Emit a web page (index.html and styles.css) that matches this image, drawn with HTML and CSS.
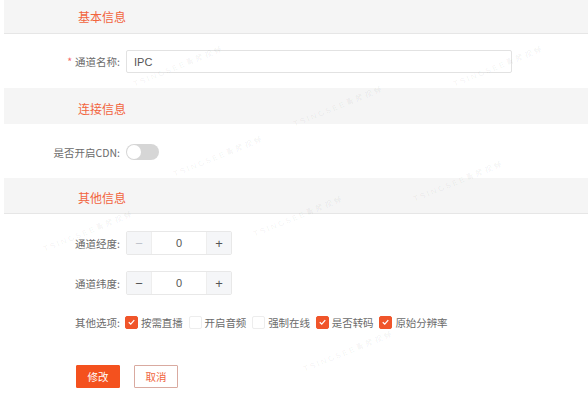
FILE: index.html
```html
<!DOCTYPE html>
<html lang="zh">
<head>
<meta charset="utf-8">
<link rel="stylesheet" href="styles.css">
</head>
<body>
<div class="page">
  <div class="band band-first"><span class="band-title">基本信息</span></div>
  <div class="row row-name">
    <label class="label"><span class="star">*</span>通道名称:</label>
    <div class="input">IPC</div>
  </div>

  <div class="band band-2"><span class="band-title">连接信息</span></div>
  <div class="row row-cdn">
    <label class="label">是否开启CDN:</label>
    <div class="switch"><span class="knob"></span></div>
  </div>

  <div class="band band-3"><span class="band-title">其他信息</span></div>
  <div class="row row-num1">
    <label class="label">通道经度:</label>
    <div class="num">
      <span class="num-btn disabled">−</span>
      <span class="num-val">0</span>
      <span class="num-btn">+</span>
    </div>
  </div>
  <div class="row row-num2">
    <label class="label">通道纬度:</label>
    <div class="num">
      <span class="num-btn">−</span>
      <span class="num-val">0</span>
      <span class="num-btn">+</span>
    </div>
  </div>
  <div class="row row-opts">
    <label class="label">其他选项:</label>
    <div class="opts">
      <span class="opt"><span class="box checked"><svg viewBox="0 0 12 12" width="12" height="12"><path d="M3 6.2 L5.2 8.3 L9 4" fill="none" stroke="#fff" stroke-width="1.4"/></svg></span>按需直播</span>
      <span class="opt"><span class="box"></span>开启音频</span>
      <span class="opt"><span class="box"></span>强制在线</span>
      <span class="opt"><span class="box checked"><svg viewBox="0 0 12 12" width="12" height="12"><path d="M3 6.2 L5.2 8.3 L9 4" fill="none" stroke="#fff" stroke-width="1.4"/></svg></span>是否转码</span>
      <span class="opt"><span class="box checked"><svg viewBox="0 0 12 12" width="12" height="12"><path d="M3 6.2 L5.2 8.3 L9 4" fill="none" stroke="#fff" stroke-width="1.4"/></svg></span>原始分辨率</span>
    </div>
  </div>
  <div class="actions">
    <button class="btn btn-primary">修改</button>
    <button class="btn btn-plain">取消</button>
  </div>
</div>
<div class="wm">
  <span class="wm-t w1">TSINGSEE青犀视频</span>
  <span class="wm-t w2">TSINGSEE青犀视频</span>
  <span class="wm-t w3">TSINGSEE青犀视频</span>
  <span class="wm-t w4">TSINGSEE青犀视频</span>
  <span class="wm-t w5">TSINGSEE青犀视频</span>
  <span class="wm-t w6">TSINGSEE青犀视频</span>
  <span class="wm-t w7">TSINGSEE青犀视频</span>
  <span class="wm-t w8">TSINGSEE青犀视频</span>
</div>
</body>
</html>
```

FILE: styles.css
```css
html, body {
  margin: 0;
  padding: 0;
  background: #fff;
}
body {
  font-family: "Liberation Sans", "Noto Sans CJK SC", sans-serif;
  color: #6b6b6b;
  font-size: 10.5px;
  width: 588px;
  height: 403px;
  overflow: hidden;
  position: relative;
}
.page {
  padding-left: 4px;
}
.band {
  height: 36px;
  background: #f5f5f5;
  border-bottom: 1px solid #e6e6e6;
  display: flex;
  align-items: center;
  padding-left: 74px;
  padding-top: 4px;
  box-sizing: border-box;
}
.band-first {
  height: 34px;
  padding-top: 0;
}
.band-2 { margin-top: 15px; border-bottom: none; }
.band-3 { margin-top: 14px; }
.band-title {
  color: #f2643d;
  font-size: 12px;
  font-family: "Noto Sans CJK SC", sans-serif;
}
.row {
  display: flex;
  align-items: center;
  height: 24px;
}
.label {
  width: 116px;
  text-align: right;
  margin-right: 6px;
  font-family: "Noto Sans CJK SC", sans-serif;
  white-space: nowrap;
}
.star {
  color: #f56c6c;
  margin-right: 3px;
}
.row-name { margin-top: 16px; height: 23px; }
.input {
  width: 386px;
  height: 23px;
  box-sizing: border-box;
  border: 1px solid #e2e2e2;
  border-radius: 2px;
  padding-left: 7px;
  display: flex;
  align-items: center;
  color: #555;
  font-size: 11px;
}
.row-cdn { margin-top: 16px; }
.switch {
  width: 33px;
  height: 16px;
  border-radius: 8px;
  background: #d6d6d6;
  position: relative;
}
.knob {
  position: absolute;
  left: 1px;
  top: 1px;
  width: 14px;
  height: 14px;
  border-radius: 50%;
  background: #fff;
}
.row-num1 { margin-top: 17px; }
.row-num2 { margin-top: 16px; }
.num {
  display: flex;
  width: 106px;
  height: 24px;
  box-sizing: border-box;
  border: 1px solid #e8e8e8;
  border-radius: 2px;
}
.num-btn {
  width: 24px;
  background: #f5f6f8;
  display: flex;
  align-items: center;
  justify-content: center;
  color: #555;
  font-size: 13px;
}
.num-btn.disabled { color: #c0c4cc; }
.num-btn:first-child { border-right: 1px solid #eeeeee; }
.num-btn:last-child { border-left: 1px solid #eeeeee; }
.num-val {
  flex: 1;
  display: flex;
  align-items: center;
  justify-content: center;
  color: #555;
  font-size: 11px;
}
.row-opts { margin-top: 15px; }
.opts {
  display: flex;
  align-items: center;
  gap: 6px;
  margin-left: -1px;
}
.opt {
  display: flex;
  align-items: center;
  gap: 3px;
  font-family: "Noto Sans CJK SC", sans-serif;
  letter-spacing: -0.1px;
}
.box {
  width: 13px;
  height: 13px;
  box-sizing: border-box;
  border: 1px solid #ededed;
  border-radius: 2px;
  background: #fff;
  display: flex;
  align-items: center;
  justify-content: center;
}
.box.checked {
  background: #f0552a;
  border-color: #f0552a;
}
.actions {
  display: flex;
  gap: 14px;
  margin-top: 31px;
  padding-left: 72px;
}
.btn {
  height: 23px;
  box-sizing: border-box;
  font-family: "Noto Sans CJK SC", sans-serif;
  font-size: 10.5px;
  border-radius: 1px;
  padding: 0;
  cursor: pointer;
}
.btn-primary {
  width: 44px;
  background: #f4511e;
  border: 1px solid #f4511e;
  color: #fff;
}
.btn-plain {
  width: 44px;
  background: #fff;
  border: 1px solid #d9aaa0;
  color: #f0643c;
}
.wm {
  position: absolute;
  inset: 0;
  pointer-events: none;
}
.wm-t {
  position: absolute;
  font-size: 8px;
  font-weight: bold;
  letter-spacing: 2px;
  color: rgba(0, 0, 0, 0.045);
  transform: rotate(-22deg);
  white-space: nowrap;
  font-family: "Liberation Sans", "Noto Sans CJK SC", sans-serif;
}
.w1 { left: 130px; top: 60px; }
.w2 { left: 290px; top: 100px; }
.w3 { left: 450px; top: 60px; }
.w4 { left: 170px; top: 150px; }
.w5 { left: 410px; top: 175px; }
.w6 { left: 40px; top: 225px; }
.w7 { left: 250px; top: 210px; }
.w8 { left: 300px; top: 345px; }
```
